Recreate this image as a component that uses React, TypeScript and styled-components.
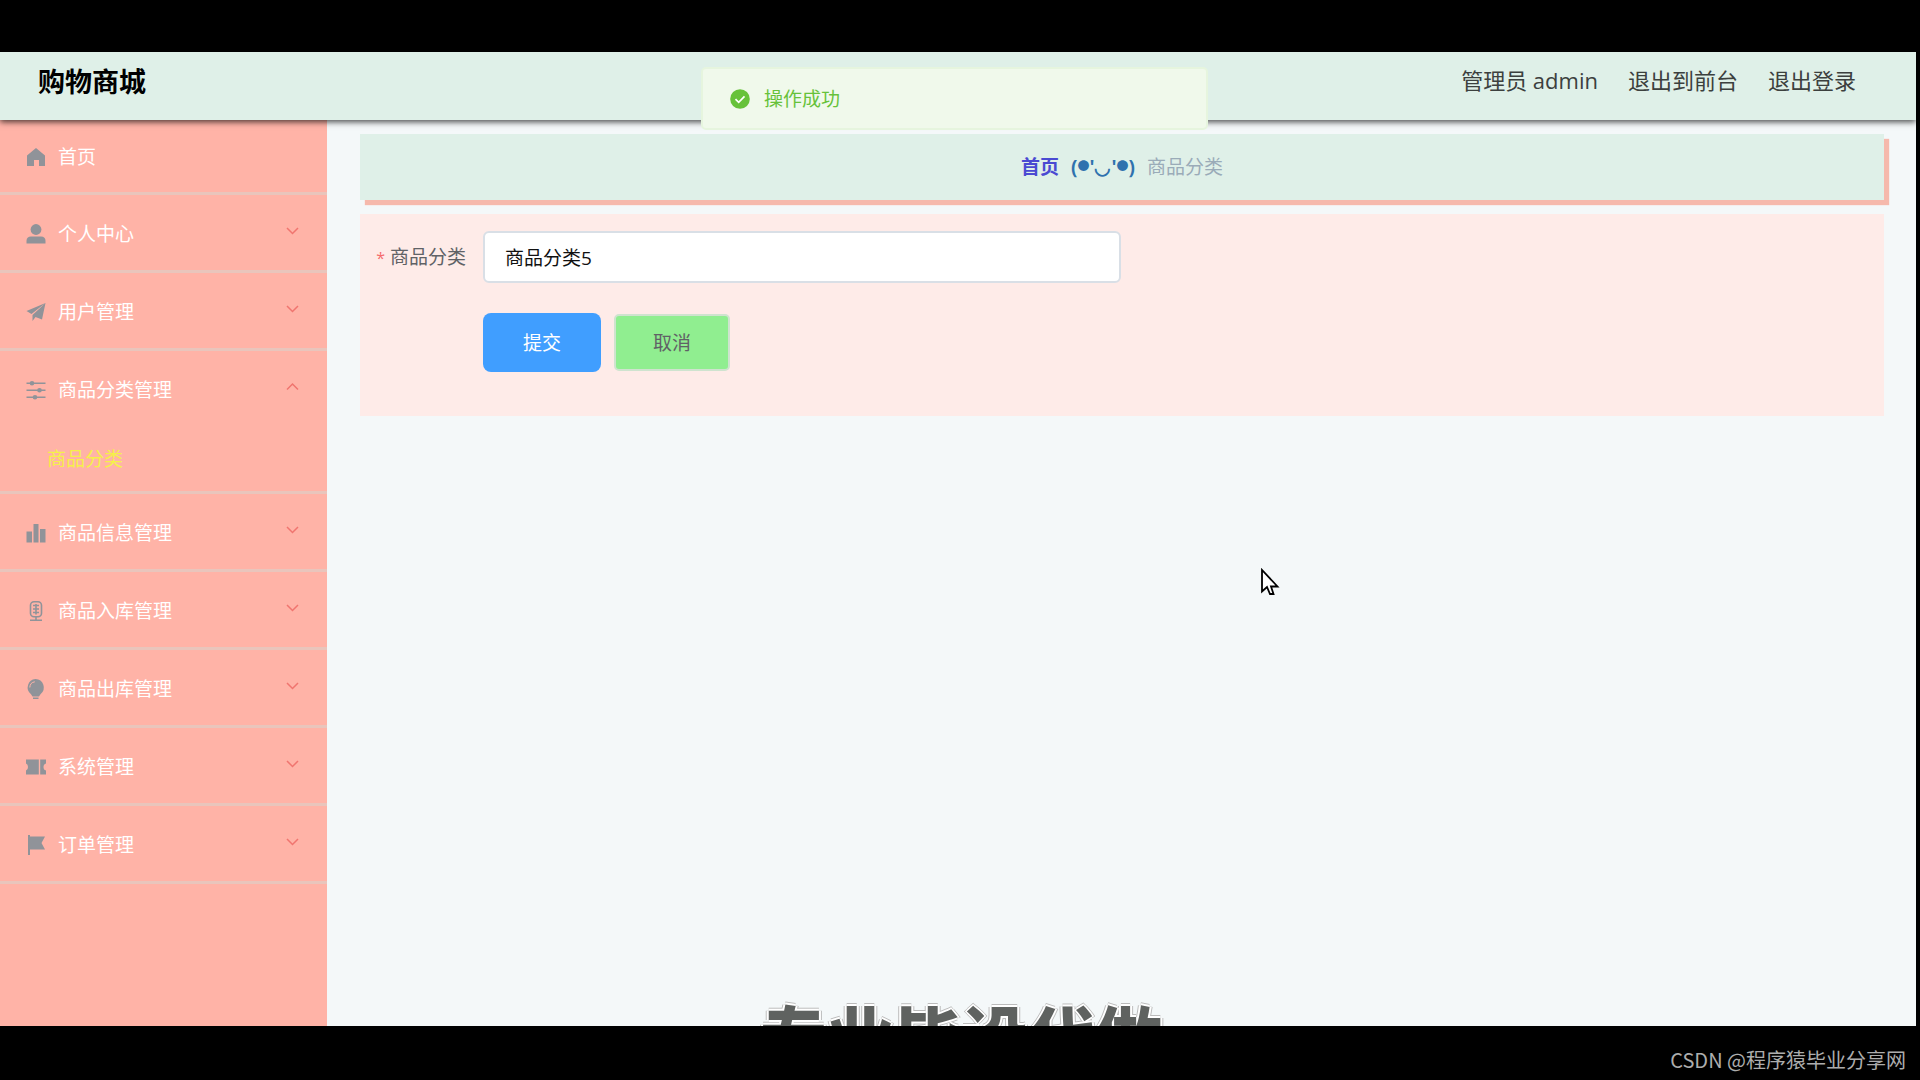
import React, { useState } from "react";
import styled, { createGlobalStyle } from "styled-components";

const GlobalStyle = createGlobalStyle`
  *, *::before, *::after { box-sizing: border-box; }
  body {
    margin: 0;
    background: #000;
    font-family: "Open Sans", "Noto Sans CJK SC", sans-serif;
    font-size: 19px;
    line-height: 24px;
  }
  button, input { font: inherit; }
`;

const Stage = styled.div`
  display: grid;
  grid-template-rows: 52px 1fr 54px;
  min-height: 100vh;
  background: #000;
`;

const Screen = styled.div`
  position: relative;
  grid-row: 2;
  display: flex;
  flex-direction: column;
  margin-right: 4px;
  overflow: hidden;
  background: #f4f8f9;
`;

const Header = styled.header`
  position: relative;
  z-index: 1;
  display: flex;
  justify-content: space-between;
  align-items: flex-start;
  height: 68px;
  padding: 14px 60px 0 38px;
  background: #dff0e8;
  box-shadow: 0 2px 6px rgba(0, 0, 0, 0.7);
`;

const Title = styled.h1`
  margin: 0;
  font-size: 27px;
  line-height: 32px;
  font-weight: 700;
  color: #000;
`;

const UserNav = styled.nav`
  display: flex;
  gap: 30px;
  font-size: 22px;
  line-height: 28px;
  color: #3c403e;
`;

const NavLink = styled.a`
  color: inherit;
  text-decoration: none;
`;

const Body = styled.div`
  display: flex;
  flex: 1;
`;

const Sidebar = styled.aside`
  flex: 0 0 327px;
  background: #ffb3a7;
`;

const Menu = styled.ul`
  margin: 0;
  padding: 0;
  list-style: none;
`;

const MenuItem = styled.li`
  border-bottom: 3px solid #e9c5bc;
`;

const MenuButton = styled.button<{ $first?: boolean }>`
  display: flex;
  align-items: center;
  width: 100%;
  height: ${(p) => (p.$first ? 72 : 75)}px;
  padding: 2px 28px 0 26px;
  border: 0;
  background: none;
  color: #fff;
  text-align: left;
  cursor: pointer;

  > span { flex: 1; margin-left: 12px; }
`;

const SubLink = styled.a`
  display: block;
  height: 65px;
  padding: 21px 0 0 47px;
  color: #f5f04a;
  text-decoration: none;
`;

const Main = styled.main`
  flex: 1;
  min-width: 0;
  padding: 14px 32px 0 33px;
`;

const Breadcrumb = styled.nav`
  display: flex;
  justify-content: center;
  align-items: center;
  height: 66px;
  background: #dff0e8;
  box-shadow: 5px 5px 1px #f6b9ac;
  color: #9aabb8;
`;

const HomeLink = styled.a`
  color: #4a4ad2;
  font-weight: 700;
  text-decoration: none;
`;

const Face = styled.span`
  display: flex;
  align-items: center;
  margin: 0 12px;
  color: #2f72ae;
  font-weight: 700;
`;

const Eye = styled.span`
  font-size: 12px;
`;

const Panel = styled.form`
  display: grid;
  grid-template-columns: 106px 1fr;
  column-gap: 17px;
  row-gap: 30px;
  margin-top: 14px;
  padding: 17px 0 44px;
  background: #feebe8;
`;

const FieldLabel = styled.label`
  align-self: center;
  text-align: right;
  color: #606266;

  &::before {
    content: "*";
    margin-right: 5px;
    color: #f56c6c;
    font-size: 16px;
  }
`;

const TextInput = styled.input`
  width: 638px;
  max-width: 100%;
  height: 52px;
  padding: 0 20px;
  border: 2px solid #d9dfe6;
  border-radius: 6px;
  background: #fff;
  color: #111;
  outline: none;
`;

const Actions = styled.div`
  grid-column: 2;
  display: flex;
  align-items: center;
  gap: 13px;
`;

const ActionButton = styled.button<{ $primary?: boolean }>`
  width: ${(p) => (p.$primary ? 118 : 116)}px;
  height: ${(p) => (p.$primary ? 59 : 57)}px;
  border: ${(p) => (p.$primary ? "0" : "2px solid #cfe3cf")};
  border-radius: ${(p) => (p.$primary ? 8 : 5)}px;
  background: ${(p) => (p.$primary ? "#409eff" : "#90ee90")};
  color: ${(p) => (p.$primary ? "#fff" : "#606266")};
  cursor: pointer;
`;

const Toast = styled.div`
  position: absolute;
  z-index: 2;
  top: 15px;
  left: calc(50% - 257px);
  display: flex;
  align-items: center;
  gap: 14px;
  width: 507px;
  height: 63px;
  padding: 0 27px;
  border: 2px solid #e6f5de;
  border-radius: 5px;
  background: #f0f9eb;
  color: #67c23a;
`;

const Pointer = styled.svg`
  position: absolute;
  top: 516px;
  left: 1260px;
`;

const Caption = styled.div`
  position: absolute;
  bottom: -48px;
  left: 760px;
  color: #5f6260;
  font-family: "Noto Sans CJK SC", sans-serif;
  font-size: 67px;
  line-height: 80px;
  font-weight: 900;
  white-space: nowrap;
  text-shadow: 2px 0 #fff, -2px 0 #fff, 0 2px #fff, 0 -2px #fff,
    3px 0 #bbb, -3px 0 #bbb, 0 3px #bbb, 0 -3px #bbb;
`;

const Credit = styled.footer`
  grid-row: 3;
  justify-self: end;
  padding: 20px 14px 0 0;
  color: #adadad;
  font-family: "Noto Sans CJK SC", sans-serif;
  font-size: 20px;
  line-height: 28px;
`;

const shapes: Record<string, React.ReactNode> = {
  home: <path d="M10 1 19 8.5V19h-6v-6H8v6H1V8.5z" />,
  user: (
    <>
      <circle cx="10" cy="5.5" r="5.400" />
      <path d="M.5 19.500v-2.500q0-4.500 4.500-4.500h10q4.500 0 4.500 4.500v2.500z" />
    </>
  ),
  plane: <path d="M19.500 1 .5 9l5 3zM19.500 1 6.500 13l0 6 3-4 6.500 2.500z" />,
  sliders: (
    <>
      <path d="M.5 2.500h19v1.500H.5zM.5 9.500h19V11H.5zM.5 16.500h19V18H.5z" />
      <circle cx="6" cy="3.200" r="2.300" />
      <circle cx="13.500" cy="10.200" r="2.300" />
      <circle cx="9" cy="17.200" r="2.300" />
    </>
  ),
  chart: <path d="M.5 8.500H6V19.500H.5zM7.500 1h5v18.500h-5zM14 6h5.500v13.500H14z" />,
  mic: (
    <g fill="none" stroke="currentColor" strokeWidth="1.600">
      <rect x="4.500" y=".8" width="11" height="15" rx="3.500" />
      <path d="M7 4.500h6M7 8h6M7 11.500h6M10 3v10.500M10 16v3M4 19.200h12" />
    </g>
  ),
  bulb: (
    <>
      <path d="M9.500 0a8.500 8.500 0 0 1 5 15.200L13 17.500H6.500l-1.500-2.300A8.500 8.500 0 0 1 9.500 0zM7 18.500h5.500v1.500H7z" />
      <path d="M3.800 8.500q.2-5 5-5.700" fill="none" stroke="#ffb3a7" strokeWidth="1" />
    </>
  ),
  ticket: <path d="M0 2.500h12.800v15H0v-4q2-.5 2-3.500T0 6.500zM14.200 2.500H20v4q-2.500.5-2.500 3.500t2.500 3.500v4h-5.800z" />,
  flag: <path d="M2 0h2v1.500h15L15.500 8l3.500 6.500H4V20H2z" />,
};

const MenuIcon = ({ name }: { name: string }) => (
  <svg width="20" height="20" viewBox="0 0 20 20" fill="#909399" color="#909399" aria-hidden="true">
    {shapes[name]}
  </svg>
);

const Chevron = ({ up }: { up?: boolean }) => (
  <svg width="13" height="18" viewBox="0 0 13 18" fill="none" stroke="#f0756f" strokeWidth="1.500" aria-hidden="true">
    <path d={up ? "M1 8.500 6.500 3 12 8.500" : "M1 3 6.500 8.500 12 3"} />
  </svg>
);

const menu = [
  { icon: "home", label: "首页" },
  { icon: "user", label: "个人中心" },
  { icon: "plane", label: "用户管理" },
  { icon: "sliders", label: "商品分类管理", child: "商品分类" },
  { icon: "chart", label: "商品信息管理" },
  { icon: "mic", label: "商品入库管理" },
  { icon: "bulb", label: "商品出库管理" },
  { icon: "ticket", label: "系统管理" },
  { icon: "flag", label: "订单管理" },
];

export default function App() {
  const [category, setCategory] = useState("商品分类5");
  return (
    <Stage>
      <GlobalStyle />
      <Screen>
        <Header>
          <Title>购物商城</Title>
          <UserNav>
            <span>管理员 admin</span>
            <NavLink href="#front">退出到前台</NavLink>
            <NavLink href="#logout">退出登录</NavLink>
          </UserNav>
        </Header>
        <Body>
          <Sidebar>
            <Menu>
              {menu.map((item, i) => (
                <MenuItem key={item.label}>
                  <MenuButton type="button" $first={i === 0}>
                    <MenuIcon name={item.icon} />
                    <span>{item.label}</span>
                    {i > 0 && <Chevron up={!!item.child} />}
                  </MenuButton>
                  {item.child && <SubLink href="#category">{item.child}</SubLink>}
                </MenuItem>
              ))}
            </Menu>
          </Sidebar>
          <Main>
            <Breadcrumb>
              <HomeLink href="#home">首页</HomeLink>
              <Face>
                (<Eye>●</Eye>'◡'<Eye>●</Eye>)
              </Face>
              <span>商品分类</span>
            </Breadcrumb>
            <Panel onSubmit={(e) => e.preventDefault()}>
              <FieldLabel htmlFor="category">商品分类</FieldLabel>
              <TextInput id="category" value={category} onChange={(e) => setCategory(e.target.value)} />
              <Actions>
                <ActionButton type="submit" $primary>提交</ActionButton>
                <ActionButton type="button">取消</ActionButton>
              </Actions>
            </Panel>
          </Main>
        </Body>
        <Toast role="status">
          <svg width="20" height="20" viewBox="0 0 20 20" aria-hidden="true">
            <circle cx="10" cy="10" r="9.800" fill="#67c23a" />
            <path d="m5.500 10.200 3.200 3.200 5.800-6" fill="none" stroke="#fff" strokeWidth="1.700" />
          </svg>
          <span>操作成功</span>
        </Toast>
        <Caption>专业毕设代做</Caption>
        <Pointer width="20" height="30" viewBox="0 0 20 30" aria-hidden="true">
          <path d="M2 2v21.500l5-4.500 3 7h3.500l-2.500-7.500h6.500z" fill="#fff" stroke="#000" strokeWidth="1.800" />
        </Pointer>
      </Screen>
      <Credit>CSDN @程序猿毕业分享网</Credit>
    </Stage>
  );
}
